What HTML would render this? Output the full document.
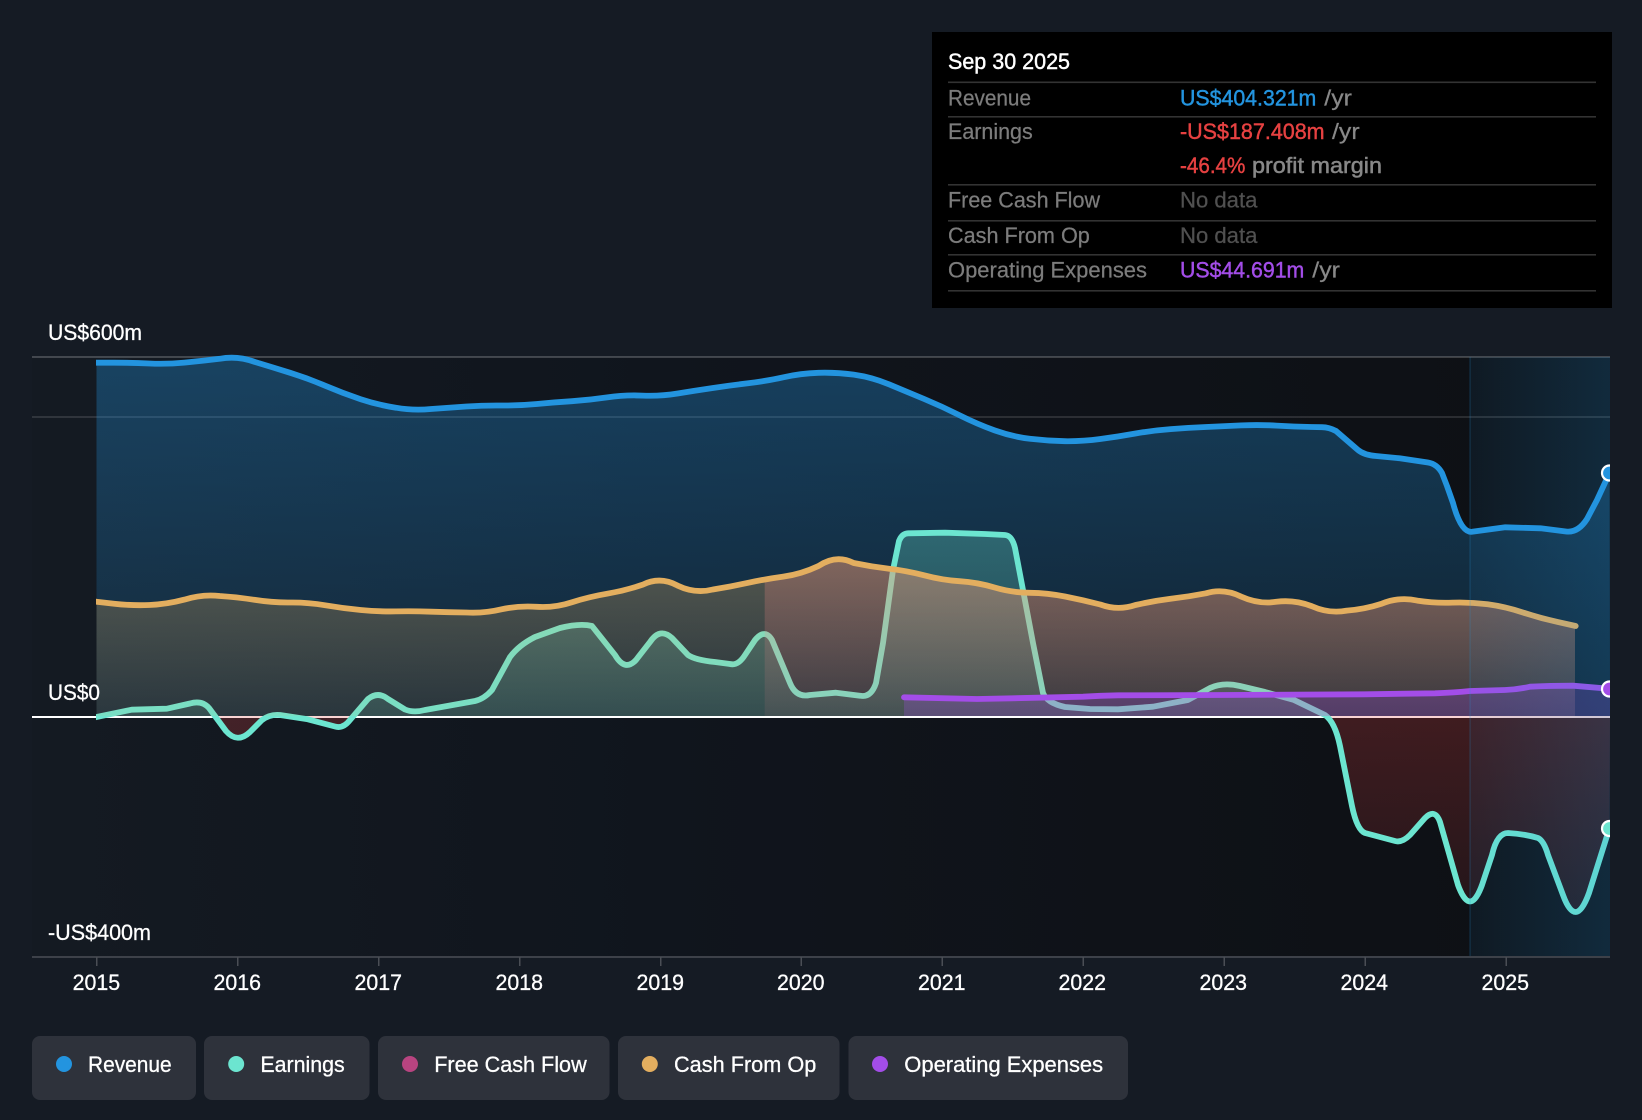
<!DOCTYPE html>
<html><head><meta charset="utf-8"><title>Chart</title>
<style>
html,body{margin:0;padding:0;background:#151b24;width:1642px;height:1120px;overflow:hidden}
svg{display:block}
text{font-family:"Liberation Sans",sans-serif;font-size:22.6px;fill:#fff;stroke:#fff;stroke-width:.3px;paint-order:stroke}
.t{font-size:22.2px;stroke-width:.45px}
.l{fill:#7c7c7c;stroke:#7c7c7c;font-size:22.2px;stroke-width:.25px}
.n{fill:#505050;stroke:#505050;font-size:22.2px;stroke-width:.25px}
.y{fill:#888;stroke:#888;font-size:22.2px;stroke-width:.25px}
.pm{stroke-width:.5px}
.ln{fill:none;stroke-width:5.8;stroke-linejoin:round;stroke-linecap:round}
</style></head><body>
<svg width="1642" height="1120" viewBox="0 0 1642 1120" xmlns="http://www.w3.org/2000/svg">
<defs>
<linearGradient id="plot" x1="0" x2="1" y1="0" y2="0"><stop offset="0" stop-color="#141a22"/><stop offset=".4" stop-color="#10151d"/><stop offset=".7" stop-color="#0f1218"/><stop offset="1" stop-color="#0d1014"/></linearGradient>
<linearGradient id="ov" x1="0" x2="1" y1="0" y2="0"><stop offset="0" stop-color="#2394df" stop-opacity=".07"/><stop offset="1" stop-color="#2394df" stop-opacity=".2"/></linearGradient>
<linearGradient id="rev" gradientUnits="userSpaceOnUse" x1="0" x2="0" y1="357" y2="717"><stop offset="0" stop-color="#2394df" stop-opacity=".34"/><stop offset="1" stop-color="#2394df" stop-opacity=".13"/></linearGradient>
<linearGradient id="cfo" gradientUnits="userSpaceOnUse" x1="0" x2="0" y1="560" y2="717"><stop offset="0" stop-color="#e3ae5f" stop-opacity=".3"/><stop offset="1" stop-color="#e3ae5f" stop-opacity=".1"/></linearGradient>
<linearGradient id="fcf" gradientUnits="userSpaceOnUse" x1="0" x2="0" y1="560" y2="717"><stop offset="0" stop-color="#f0788c" stop-opacity=".3"/><stop offset="1" stop-color="#f0788c" stop-opacity=".09"/></linearGradient>
<linearGradient id="epos" gradientUnits="userSpaceOnUse" x1="0" x2="0" y1="530" y2="717"><stop offset="0" stop-color="#6ce5d0" stop-opacity=".3"/><stop offset="1" stop-color="#6ce5d0" stop-opacity=".15"/></linearGradient>
<linearGradient id="eneg" gradientUnits="userSpaceOnUse" x1="0" x2="0" y1="717" y2="957"><stop offset="0" stop-color="#e64141" stop-opacity=".23"/><stop offset="1" stop-color="#e64141" stop-opacity=".07"/></linearGradient>
<clipPath id="cp"><rect x="96" y="340" width="1514" height="617"/></clipPath>
<clipPath id="up"><rect x="96" y="340" width="1514" height="376"/></clipPath>
<clipPath id="dn"><rect x="96" y="716" width="1514" height="241"/></clipPath>
<clipPath id="fc"><rect x="764.7" y="340" width="810.3" height="376"/></clipPath>
<clipPath id="dots"><rect x="1590" y="340" width="20" height="617"/></clipPath>
</defs>

<rect x="32" y="357" width="1578" height="600" fill="url(#plot)"/>
<rect x="32" y="356" width="1578" height="2" fill="#fff" fill-opacity=".2"/>
<rect x="32" y="416" width="1578" height="2" fill="#fff" fill-opacity=".12"/>
<rect x="32" y="716" width="1578" height="2" fill="#fff"/>

<path fill="url(#rev)" d="M96.5 362.7L114.1 362.7Q131.7 362.7 149.3 363.5Q166.9 364.3 184.5 362.6Q202 361 219.7 358.8Q237.4 355.5 255 362Q272.6 367.3 290.2 372.8Q307.8 378.3 325.4 385.8Q343 393.3 360.7 399.2Q378.3 405 395.9 407.7Q413.5 410.8 431.1 409Q448.7 407.7 466.3 406.5Q483.9 405.3 501.5 405.5Q519.1 405.7 536.8 404Q554.4 402.3 572 401.2Q589.6 400 607.2 397.4Q624.8 394.8 642.4 395.6Q660 396.4 677.6 393.5Q695.2 390.6 712.9 388Q730.5 385.4 748.1 383.3Q765.7 381.2 783.3 377.3Q800.9 373.3 818.5 372.8Q836.1 372.3 853.7 374.6Q871.3 377 889 384.3Q906.6 391.7 924.2 399Q941.8 406.3 959.4 415.2Q977 424 994.6 430.4Q1012.2 436.7 1029.8 438.8Q1047.4 440.9 1065 441.2Q1082.7 441.4 1100.3 439Q1117.9 436.7 1135.5 433.5Q1153.1 430.4 1170.7 429.1Q1188.3 427.8 1205.9 427Q1223.5 426.2 1241.2 425.4Q1258.8 424.6 1276.4 425.6Q1294 426.7 1311.6 427L1322 427.2Q1329 427.3 1336 431L1358 450Q1364 455 1376 456L1399.6 458.3 1428 462.5Q1437 464 1442 473L1447 486 1453 503Q1461 533 1472 531.8L1505.3 527.3 1540.5 528.3 1566 531.5Q1578 533 1587 519L1597 500 1609.5 473 1610 716 96.5 716Z"/>
<path class="ln" stroke="#2394df" clip-path="url(#cp)" d="M90 362.7L114.1 362.7Q131.7 362.7 149.3 363.5Q166.9 364.3 184.5 362.6Q202 361 219.7 358.8Q237.4 355.5 255 362Q272.6 367.3 290.2 372.8Q307.8 378.3 325.4 385.8Q343 393.3 360.7 399.2Q378.3 405 395.9 407.7Q413.5 410.8 431.1 409Q448.7 407.7 466.3 406.5Q483.9 405.3 501.5 405.5Q519.1 405.7 536.8 404Q554.4 402.3 572 401.2Q589.6 400 607.2 397.4Q624.8 394.8 642.4 395.6Q660 396.4 677.6 393.5Q695.2 390.6 712.9 388Q730.5 385.4 748.1 383.3Q765.7 381.2 783.3 377.3Q800.9 373.3 818.5 372.8Q836.1 372.3 853.7 374.6Q871.3 377 889 384.3Q906.6 391.7 924.2 399Q941.8 406.3 959.4 415.2Q977 424 994.6 430.4Q1012.2 436.7 1029.8 438.8Q1047.4 440.9 1065 441.2Q1082.7 441.4 1100.3 439Q1117.9 436.7 1135.5 433.5Q1153.1 430.4 1170.7 429.1Q1188.3 427.8 1205.9 427Q1223.5 426.2 1241.2 425.4Q1258.8 424.6 1276.4 425.6Q1294 426.7 1311.6 427L1322 427.2Q1329 427.3 1336 431L1358 450Q1364 455 1376 456L1399.6 458.3 1428 462.5Q1437 464 1442 473L1447 486 1453 503Q1461 533 1472 531.8L1505.3 527.3 1540.5 528.3 1566 531.5Q1578 533 1587 519L1597 500 1609.5 473"/>

<path fill="url(#epos)" clip-path="url(#up)" d="M96.5 717L131.7 709.7 166.9 708.7 190 703.5Q202 700 209 708L226 731Q237.4 744 250 732L262 720Q270 714 280 715L307.8 719.3 335 726.5Q343 729 350 720L368 699Q378 691 388 699L405 709.5Q413.5 713 425 710L475 701Q484 699 492 690L510 657Q519 645 535 637L560 628Q580 623 592 626L615 655Q625 672 636 660L650 642Q660 627 672 638L688 655Q695 660 715 662L730 664Q738 666 745 655L755 640Q765 628 772 640L790 683Q796 698 810 695L836 692.7 860 695.7Q871 698 876 683L883 643 893 570 899 541Q902 533.5 908 533.3L945 532.7 985 534 1005 535Q1012 535.5 1015 548L1023 590 1033 643 1043 693Q1047 703 1065 707L1090 709 1118 709.3 1153 706.7 1188 700 1210 688Q1223 682 1240 686L1265 692 1294 700 1325 715Q1335 722 1340 746L1352 806Q1357 830 1365 833L1395 841Q1402 843 1410 835L1425 818Q1435 808 1440 822L1458 885Q1470 918 1482 885L1492 855Q1497 833 1508 833Q1525 834 1538 838Q1544 841 1548 855L1563 895Q1575.7 930 1589 893L1609.5 828 1610 717Z"/>
<path fill="url(#eneg)" clip-path="url(#dn)" d="M96.5 717L131.7 709.7 166.9 708.7 190 703.5Q202 700 209 708L226 731Q237.4 744 250 732L262 720Q270 714 280 715L307.8 719.3 335 726.5Q343 729 350 720L368 699Q378 691 388 699L405 709.5Q413.5 713 425 710L475 701Q484 699 492 690L510 657Q519 645 535 637L560 628Q580 623 592 626L615 655Q625 672 636 660L650 642Q660 627 672 638L688 655Q695 660 715 662L730 664Q738 666 745 655L755 640Q765 628 772 640L790 683Q796 698 810 695L836 692.7 860 695.7Q871 698 876 683L883 643 893 570 899 541Q902 533.5 908 533.3L945 532.7 985 534 1005 535Q1012 535.5 1015 548L1023 590 1033 643 1043 693Q1047 703 1065 707L1090 709 1118 709.3 1153 706.7 1188 700 1210 688Q1223 682 1240 686L1265 692 1294 700 1325 715Q1335 722 1340 746L1352 806Q1357 830 1365 833L1395 841Q1402 843 1410 835L1425 818Q1435 808 1440 822L1458 885Q1470 918 1482 885L1492 855Q1497 833 1508 833Q1525 834 1538 838Q1544 841 1548 855L1563 895Q1575.7 930 1589 893L1609.5 828 1610 716 96.5 716Z"/>
<path class="ln" stroke="#6ce5d0" clip-path="url(#cp)" d="M90 718.5L96.5 717 131.7 709.7 166.9 708.7 190 703.5Q202 700 209 708L226 731Q237.4 744 250 732L262 720Q270 714 280 715L307.8 719.3 335 726.5Q343 729 350 720L368 699Q378 691 388 699L405 709.5Q413.5 713 425 710L475 701Q484 699 492 690L510 657Q519 645 535 637L560 628Q580 623 592 626L615 655Q625 672 636 660L650 642Q660 627 672 638L688 655Q695 660 715 662L730 664Q738 666 745 655L755 640Q765 628 772 640L790 683Q796 698 810 695L836 692.7 860 695.7Q871 698 876 683L883 643 893 570 899 541Q902 533.5 908 533.3L945 532.7 985 534 1005 535Q1012 535.5 1015 548L1023 590 1033 643 1043 693Q1047 703 1065 707L1090 709 1118 709.3 1153 706.7 1188 700 1210 688Q1223 682 1240 686L1265 692 1294 700 1325 715Q1335 722 1340 746L1352 806Q1357 830 1365 833L1395 841Q1402 843 1410 835L1425 818Q1435 808 1440 822L1458 885Q1470 918 1482 885L1492 855Q1497 833 1508 833Q1525 834 1538 838Q1544 841 1548 855L1563 895Q1575.7 930 1589 893L1609.5 828"/>

<path fill="url(#fcf)" clip-path="url(#fc)" d="M96.5 601.7L114.1 603.7Q131.7 605.7 149.3 605Q166.9 604.3 184.5 599.6Q202.2 594 219.8 596Q237.4 597 255 599.9Q272.6 602.7 290.2 602.5Q307.8 602.3 325.4 605.3Q343 608.3 360.7 610Q378.3 611.7 395.9 611.4Q413.5 611 431.1 611.7Q448.7 612.3 466.3 612.5Q483.9 613.5 501.5 609.3Q519.1 605.5 536.8 606.8Q554.4 608 572 602.2Q589.6 596.7 607.2 593.7Q624.8 590.7 642.4 584.8Q660 576 677.6 585.6Q695.2 594 712.9 589.5Q730.5 586.7 748.1 582.8Q765.7 579 783.3 576.6Q800.9 574.3 818.5 566Q836.1 554 853.7 563Q871.3 566.7 889 568.7Q906.6 570.7 924.2 575.3Q941.8 580 959.4 581.2Q977 582.3 994.6 587.5Q1012.2 592.7 1029.8 592.8Q1047.4 593 1065 596.5Q1082.7 600 1100.3 604.5Q1117.9 611 1135.5 605Q1153.1 601 1170.7 598.8Q1188.3 596.7 1205.9 593.3Q1223.5 588 1241.2 596.6Q1258.8 604.5 1276.4 601.8Q1294 599.5 1311.6 606.1Q1329.2 614 1346.8 610.6Q1364.4 609.3 1382 603.6Q1399.6 596.5 1417.2 600.6Q1434.9 603.3 1452.5 602.6Q1470.1 602 1487.7 604.3Q1505.3 606.7 1522.9 612.5Q1540.5 618.3 1558.1 622.1L1575.7 626 1575.7 716 96.5 716Z"/>
<path fill="url(#cfo)" d="M96.5 601.7L114.1 603.7Q131.7 605.7 149.3 605Q166.9 604.3 184.5 599.6Q202.2 594 219.8 596Q237.4 597 255 599.9Q272.6 602.7 290.2 602.5Q307.8 602.3 325.4 605.3Q343 608.3 360.7 610Q378.3 611.7 395.9 611.4Q413.5 611 431.1 611.7Q448.7 612.3 466.3 612.5Q483.9 613.5 501.5 609.3Q519.1 605.5 536.8 606.8Q554.4 608 572 602.2Q589.6 596.7 607.2 593.7Q624.8 590.7 642.4 584.8Q660 576 677.6 585.6Q695.2 594 712.9 589.5Q730.5 586.7 748.1 582.8Q765.7 579 783.3 576.6Q800.9 574.3 818.5 566Q836.1 554 853.7 563Q871.3 566.7 889 568.7Q906.6 570.7 924.2 575.3Q941.8 580 959.4 581.2Q977 582.3 994.6 587.5Q1012.2 592.7 1029.8 592.8Q1047.4 593 1065 596.5Q1082.7 600 1100.3 604.5Q1117.9 611 1135.5 605Q1153.1 601 1170.7 598.8Q1188.3 596.7 1205.9 593.3Q1223.5 588 1241.2 596.6Q1258.8 604.5 1276.4 601.8Q1294 599.5 1311.6 606.1Q1329.2 614 1346.8 610.6Q1364.4 609.3 1382 603.6Q1399.6 596.5 1417.2 600.6Q1434.9 603.3 1452.5 602.6Q1470.1 602 1487.7 604.3Q1505.3 606.7 1522.9 612.5Q1540.5 618.3 1558.1 622.1L1575 626 1575 716 96.5 716Z"/>
<path class="ln" stroke="#e3ae5f" clip-path="url(#cp)" d="M90 601L96.5 601.7 114.1 603.7Q131.7 605.7 149.3 605Q166.9 604.3 184.5 599.6Q202.2 594 219.8 596Q237.4 597 255 599.9Q272.6 602.7 290.2 602.5Q307.8 602.3 325.4 605.3Q343 608.3 360.7 610Q378.3 611.7 395.9 611.4Q413.5 611 431.1 611.7Q448.7 612.3 466.3 612.5Q483.9 613.5 501.5 609.3Q519.1 605.5 536.8 606.8Q554.4 608 572 602.2Q589.6 596.7 607.2 593.7Q624.8 590.7 642.4 584.8Q660 576 677.6 585.6Q695.2 594 712.9 589.5Q730.5 586.7 748.1 582.8Q765.7 579 783.3 576.6Q800.9 574.3 818.5 566Q836.1 554 853.7 563Q871.3 566.7 889 568.7Q906.6 570.7 924.2 575.3Q941.8 580 959.4 581.2Q977 582.3 994.6 587.5Q1012.2 592.7 1029.8 592.8Q1047.4 593 1065 596.5Q1082.7 600 1100.3 604.5Q1117.9 611 1135.5 605Q1153.1 601 1170.7 598.8Q1188.3 596.7 1205.9 593.3Q1223.5 588 1241.2 596.6Q1258.8 604.5 1276.4 601.8Q1294 599.5 1311.6 606.1Q1329.2 614 1346.8 610.6Q1364.4 609.3 1382 603.6Q1399.6 596.5 1417.2 600.6Q1434.9 603.3 1452.5 602.6Q1470.1 602 1487.7 604.3Q1505.3 606.7 1522.9 612.5Q1540.5 618.3 1558.1 622.1L1575.7 626"/>

<path fill="#a34de8" fill-opacity=".25" d="M904 697.3L977 699 1012 698.3 1083 696.7 1118 695.3 1223 695 1364 694.3 1435 693.3 1470 691 1505 690 1530 686.7 1573 685.7 1610 689 1610 716 904 716Z"/>
<path class="ln" stroke="#a34de8" clip-path="url(#cp)" d="M904 697.3L977 699 1012 698.3 1083 696.7Q1100 695.5 1118 695.3L1223 695 1364 694.3 1435 693.3Q1455 692.5 1470 691L1505 690Q1518 689.5 1530 686.7Q1550 685.7 1573 685.7L1612 689"/>

<rect x="1470" y="357" width="140" height="600" fill="url(#ov)"/>
<rect x="1469" y="357" width="2" height="600" fill="#2394df" fill-opacity=".14"/>

<g clip-path="url(#dots)" stroke="#fff" stroke-width="2.2">
<circle cx="1609.5" cy="473" r="7.5" fill="#2394df"/>
<circle cx="1609.5" cy="828.5" r="7.5" fill="#6ce5d0"/>
<circle cx="1609.5" cy="689" r="7.5" fill="#a34de8"/>
</g>

<rect x="32" y="956" width="1578" height="2" fill="#3d4149"/>
<g fill="#4a4e55">
<rect x="96" y="957" width="1.5" height="9"/><rect x="237" y="957" width="1.5" height="9"/><rect x="378" y="957" width="1.5" height="9"/><rect x="519" y="957" width="1.5" height="9"/><rect x="660" y="957" width="1.5" height="9"/><rect x="800.5" y="957" width="1.5" height="9"/><rect x="941.5" y="957" width="1.5" height="9"/><rect x="1082.5" y="957" width="1.5" height="9"/><rect x="1223.5" y="957" width="1.5" height="9"/><rect x="1364.5" y="957" width="1.5" height="9"/><rect x="1505.5" y="957" width="1.5" height="9"/>
</g>
<text x="72.6" y="990" textLength="47.5" lengthAdjust="spacingAndGlyphs">2015</text>
<text x="213.5" y="990" textLength="47.5" lengthAdjust="spacingAndGlyphs">2016</text>
<text x="354.5" y="990" textLength="47.5" lengthAdjust="spacingAndGlyphs">2017</text>
<text x="495.5" y="990" textLength="47.5" lengthAdjust="spacingAndGlyphs">2018</text>
<text x="636.5" y="990" textLength="47.5" lengthAdjust="spacingAndGlyphs">2019</text>
<text x="777" y="990" textLength="47.5" lengthAdjust="spacingAndGlyphs">2020</text>
<text x="918" y="990" textLength="47.5" lengthAdjust="spacingAndGlyphs">2021</text>
<text x="1058.5" y="990" textLength="47.5" lengthAdjust="spacingAndGlyphs">2022</text>
<text x="1199.5" y="990" textLength="47.5" lengthAdjust="spacingAndGlyphs">2023</text>
<text x="1340.5" y="990" textLength="47.5" lengthAdjust="spacingAndGlyphs">2024</text>
<text x="1481.5" y="990" textLength="47.5" lengthAdjust="spacingAndGlyphs">2025</text>

<text x="48" y="340" textLength="94" lengthAdjust="spacingAndGlyphs">US$600m</text>
<text x="48" y="700" textLength="52" lengthAdjust="spacingAndGlyphs">US$0</text>
<text x="48" y="940" textLength="103" lengthAdjust="spacingAndGlyphs">-US$400m</text>

<rect x="932" y="32" width="680" height="276" fill="#000"/>
<g fill="#333">
<rect x="948" y="81.5" width="648" height="1.6"/><rect x="948" y="116" width="648" height="1.6"/><rect x="948" y="184" width="648" height="1.6"/><rect x="948" y="220" width="648" height="1.6"/><rect x="948" y="254" width="648" height="1.6"/><rect x="948" y="290" width="648" height="1.6"/>
</g>
<text class="t" x="948" y="69" textLength="122" lengthAdjust="spacingAndGlyphs">Sep 30 2025</text>
<text class="l" x="948" y="105.7" textLength="83" lengthAdjust="spacingAndGlyphs">Revenue</text>
<text class="t" x="1180" y="105.7" style="fill:#2394df;stroke:#2394df" textLength="136.3" lengthAdjust="spacingAndGlyphs">US$404.321m</text>
<text class="y" x="1324.3" y="105.7" textLength="27.6" lengthAdjust="spacingAndGlyphs">/yr</text>
<text class="l" x="948" y="139" textLength="84.7" lengthAdjust="spacingAndGlyphs">Earnings</text>
<text class="t" x="1180" y="139" style="fill:#e64141;stroke:#e64141" textLength="144.6" lengthAdjust="spacingAndGlyphs">-US$187.408m</text>
<text class="y" x="1332" y="139" textLength="27.6" lengthAdjust="spacingAndGlyphs">/yr</text>
<text class="t" x="1180" y="173" style="fill:#e64141;stroke:#e64141" textLength="65.4" lengthAdjust="spacingAndGlyphs">-46.4%</text>
<text class="y pm" x="1252" y="173" textLength="130" lengthAdjust="spacingAndGlyphs">profit margin</text>
<text class="l" x="948" y="207.7" textLength="152" lengthAdjust="spacingAndGlyphs">Free Cash Flow</text>
<text class="n" x="1180" y="207.7" textLength="77.4" lengthAdjust="spacingAndGlyphs">No data</text>
<text class="l" x="948" y="243" textLength="141.8" lengthAdjust="spacingAndGlyphs">Cash From Op</text>
<text class="n" x="1180" y="243" textLength="77.4" lengthAdjust="spacingAndGlyphs">No data</text>
<text class="l" x="948" y="277.7" textLength="199" lengthAdjust="spacingAndGlyphs">Operating Expenses</text>
<text class="t" x="1180" y="277.7" style="fill:#a34de8;stroke:#a34de8" textLength="124.3" lengthAdjust="spacingAndGlyphs">US$44.691m</text>
<text class="y" x="1312.3" y="277.7" textLength="27.6" lengthAdjust="spacingAndGlyphs">/yr</text>

<g fill="#2e323b">
<rect x="32" y="1036" width="164" height="64" rx="8"/>
<rect x="204" y="1036" width="165.5" height="64" rx="8"/>
<rect x="378" y="1036" width="231.5" height="64" rx="8"/>
<rect x="618" y="1036" width="221.5" height="64" rx="8"/>
<rect x="848.5" y="1036" width="279.5" height="64" rx="8"/>
</g>
<circle cx="64" cy="1064" r="8" fill="#2394df"/>
<circle cx="236.2" cy="1064" r="8" fill="#6ce5d0"/>
<circle cx="410" cy="1064" r="8" fill="#b84480"/>
<circle cx="649.8" cy="1064" r="8" fill="#e3ae5f"/>
<circle cx="880" cy="1064" r="8" fill="#a34de8"/>
<text x="88" y="1072" textLength="83.6" lengthAdjust="spacingAndGlyphs">Revenue</text>
<text x="260.4" y="1072" textLength="84.3" lengthAdjust="spacingAndGlyphs">Earnings</text>
<text x="434.2" y="1072" textLength="152.5" lengthAdjust="spacingAndGlyphs">Free Cash Flow</text>
<text x="674" y="1072" textLength="142.3" lengthAdjust="spacingAndGlyphs">Cash From Op</text>
<text x="904.3" y="1072" textLength="198.8" lengthAdjust="spacingAndGlyphs">Operating Expenses</text>
</svg>
</body></html>
